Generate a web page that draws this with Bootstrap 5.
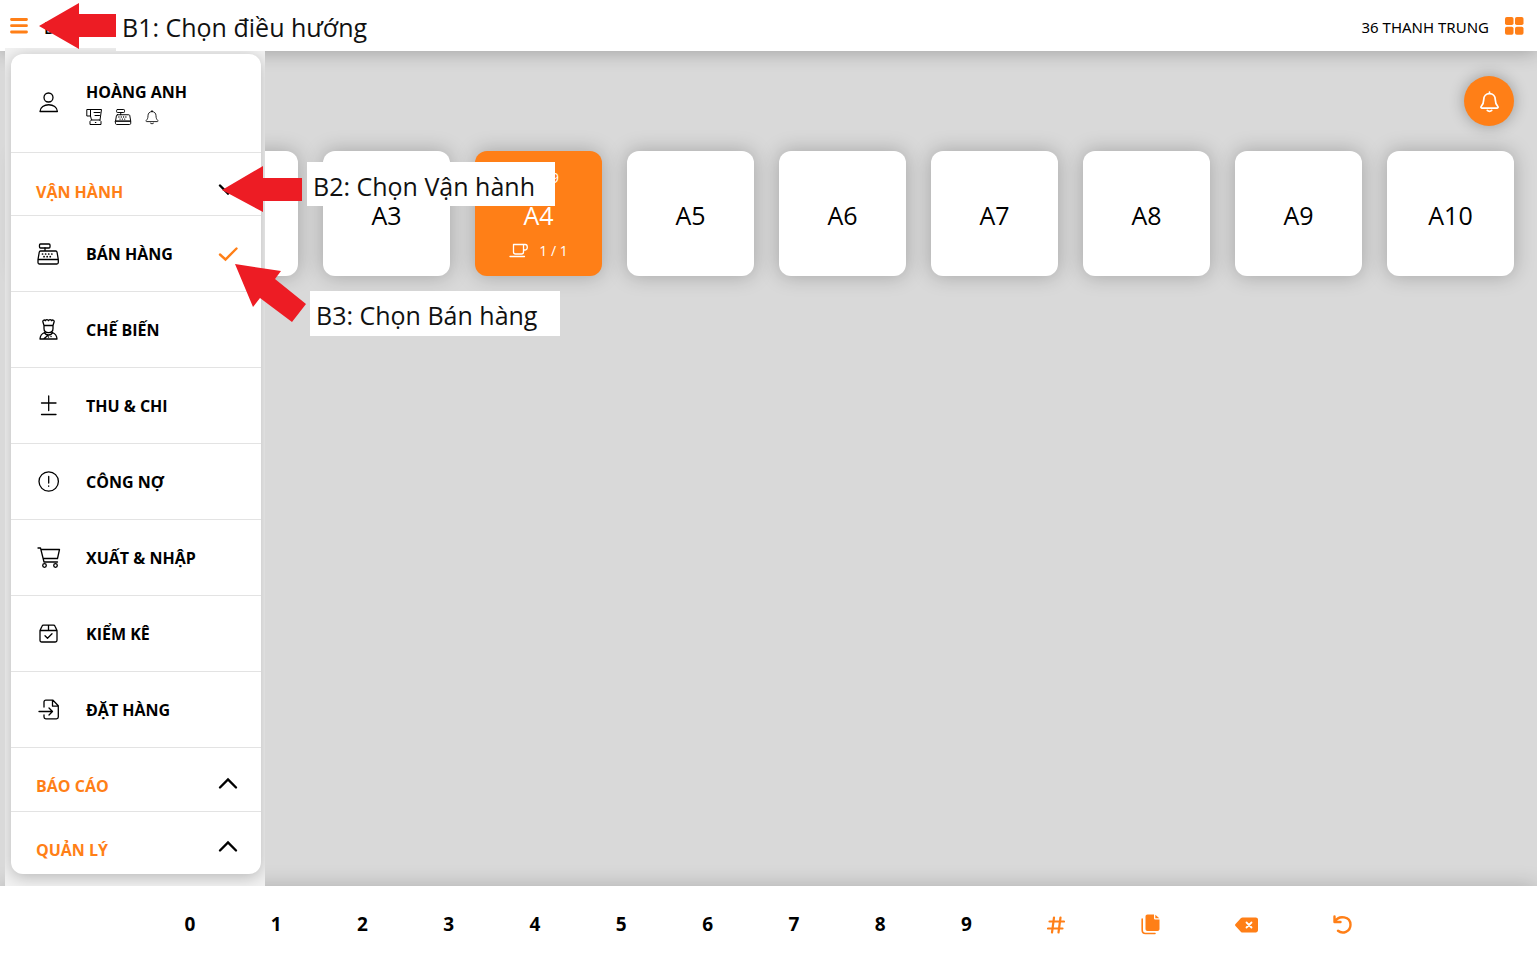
<!DOCTYPE html>
<html lang="vi">
<head>
<meta charset="utf-8">
<meta name="viewport" content="width=device-width, initial-scale=1">
<title>Bán hàng</title>
<link href="https://cdn.jsdelivr.net/npm/bootstrap@5.3.0/dist/css/bootstrap.min.css" rel="stylesheet">
<style>
  :root { --brand: #ff7f17; --line: #e3e3e3; }
  body { font-family: "Open Sans", "Noto Sans", sans-serif; color: #000; background: #fff; }
  svg { display: block; }
  .ico { fill: none; stroke: currentColor; stroke-width: 1.3; stroke-linecap: round; stroke-linejoin: round; }
  .thin { stroke-width: 1; }
  .plain { border: 0; background: none; padding: 0; color: inherit; font-weight: inherit; }
  .brand { color: var(--brand); }
  .topbar { height: 51px; padding: 0 13px 0 10px; box-shadow: 0 0 20px rgba(0,0,0,.3); z-index: 2; }
  .page-name { font-size: 16px; font-weight: 600; padding-left: 16px; }
  .shop { font-family: "Noto Sans", sans-serif; font-size: 15px; line-height: 24px; padding-top: 3px; }
  .floor { background: #d9d9d9; }
  .floor-in { padding: 25px 23px 25px 19px; }
  .bell { width: 50px; height: 50px; border-radius: 50%; background: var(--brand); color: #fff; box-shadow: 0 0 15px rgba(0,0,0,.3); }
  .tables { display: grid; grid-template-columns: repeat(10, 1fr); gap: 25px; margin-top: 25px; }
  .seat { height: 125px; border-radius: 12px; background: #fff; box-shadow: 0 0 20px rgba(0,0,0,.25); font-size: 25px; line-height: 24px; display: grid; grid-template-rows: 1fr 24px 1fr; padding: 2px 0 0; justify-items: center; align-items: center; }
  .seat.busy { background: var(--brand); color: #fff; font-weight: 500; }
  .seat small { font-size: 14px; line-height: 20px; }
  .seat .clock { justify-self: end; padding-right: 43px; }
  .side { left: 5px; top: -3px; bottom: 0; width: 260px; background: #f2f2f2; padding: 6px 4px 0 6px; z-index: 3; overflow: hidden; }
  .panel { background: #fff; border-radius: 12px; box-shadow: 0 3px 16px rgba(0,0,0,.25); font-size: 16px; font-weight: 700; }
  .panel > * { border-bottom: 1px solid var(--line); padding: 0 23px 0 25px; width: 100%; }
  .panel > :last-child { border-bottom: 0; }
  .user { height: 99px; }
  .group { height: 64px; }
  .group span { padding-top: 13px; }
  .group svg { margin-top: 8px; color: #000; }
  .group.first { height: 63px; }
  .group.first span { padding-top: 15px; }
  .group.final { height: 62px; }
  .entry { height: 76px; color: #000; text-decoration: none; }
  .slot { width: 50px; }
  .keys { height: 79px; padding: 0 188px 2px 182px; padding-inline: 12%; box-shadow: 0 0 20px rgba(0,0,0,.2); font-size: 19px; font-weight: 700; z-index: 2; }
  .note { position: absolute; z-index: 5; background: #fff; font-size: 25px; line-height: 40px; white-space: nowrap; padding: 4px 6px 0; color: #111; }
  .arrow { position: absolute; z-index: 6; fill: #ed1c24; }
  .n1 { left: 116px; top: 0; width: 260px; height: 51px; line-height: 46px; }
  .n2 { left: 307px; top: 162px; width: 248px; }
  .n3 { left: 310px; top: 291px; width: 250px; height: 45px; }
  .a1 { left: 39px; top: 3px; }
  .a2 { left: 222px; top: 166px; }
  .a3 { left: 235px; top: 264px; }
</style>
</head>
<body class="d-flex flex-column min-vh-100 position-relative">

<svg width="0" height="0" class="position-absolute" aria-hidden="true">
  <symbol id="bell" viewBox="0 0 24 24"><path d="M12 2.200v1.600M12 3.800c-3.600 0-6 2.700-6 6.200 0 4-1.200 5.600-2.700 7.200-.6.700-.2 1.700.7 1.700h16c.9 0 1.300-1 .7-1.700C19.200 15.600 18 14 18 10c0-3.500-2.400-6.200-6-6.200zM9.700 21.300c1.200 1.200 3.400 1.200 4.600 0"/></symbol>
  <symbol id="register" viewBox="0 0 24 24"><rect x="3.500" y="2" width="10.500" height="4" rx="1"/><path d="M9 6v3M4.500 9h15.200c.7 0 1.200.4 1.300 1l1.300 7.500H2l1.300-7.500c.1-.6.500-1 1.200-1zM2 17.500h20.300v3c0 .9-.6 1.500-1.500 1.500H3.500c-.9 0-1.500-.6-1.500-1.500z"/><path stroke-dasharray=".1 3" stroke-width="1.700" d="M6.500 12h12M8 14.700h9"/></symbol>
  <symbol id="up" viewBox="0 0 20 14"><path fill="none" stroke="currentColor" stroke-width="2.400" stroke-linecap="round" d="M2 10.500l8-8 8 8"/></symbol>
</svg>

<header class="topbar d-flex align-items-center justify-content-between bg-white position-relative">
  <div class="d-flex align-items-center">
    <button class="plain brand" aria-label="Menu"><svg width="18" height="18" viewBox="0 0 18 18" stroke="currentColor" stroke-width="2.800" stroke-linecap="round"><path d="M1.500 2.500h15M1.500 8.700h15M1.500 15h15"/></svg></button>
    <span class="page-name pt-1">B</span>
  </div>
  <div class="d-flex align-items-center gap-3">
    <span class="shop">36 THANH TRUNG</span>
    <button class="plain brand" aria-label="Apps"><svg width="19" height="18" viewBox="0 0 19 18" fill="currentColor"><rect width="8.500" height="8" rx="1.800"/><rect x="10" width="8.500" height="8" rx="1.800"/><rect y="9.800" width="8.500" height="8" rx="1.800"/><rect x="10" y="9.800" width="8.500" height="8" rx="1.800"/></svg></button>
  </div>
</header>

<main class="floor flex-grow-1 position-relative">
  <div class="floor-in">
    <div class="d-flex justify-content-end">
      <button class="plain bell d-flex align-items-center justify-content-center" aria-label="Bell"><svg class="ico" style="stroke-width:1.8" width="23" height="23"><use href="#bell"/></svg></button>
    </div>
    <div class="tables">
      <button class="plain seat"></button>
      <button class="plain seat"></button>
      <button class="plain seat"><span></span><span>A3</span></button>
      <button class="plain seat busy"><small class="clock">9</small><span>A4</span>
        <small class="d-flex align-items-center gap-2"><svg class="ico" width="22" height="16" viewBox="0 0 22 16"><path d="M4.500 1.500h10V9c0 1.200-.8 2-2 2h-6c-1.200 0-2-.8-2-2zM14.500 1.500h1.700c2.800 0 2.800 5.500 0 5.500h-1.700M1 13.500h14.500"/></svg><span>1 / 1</span></small></button>
      <button class="plain seat"><span></span><span>A5</span></button>
      <button class="plain seat"><span></span><span>A6</span></button>
      <button class="plain seat"><span></span><span>A7</span></button>
      <button class="plain seat"><span></span><span>A8</span></button>
      <button class="plain seat"><span></span><span>A9</span></button>
      <button class="plain seat"><span></span><span>A10</span></button>
    </div>
  </div>

  <aside class="side position-absolute">
    <nav class="panel">
      <div class="user d-flex align-items-center">
        <div class="slot"><svg class="ico" width="24" height="24" viewBox="0 0 24 24"><circle cx="12.500" cy="6.500" r="4.500"/><path d="M4 20.500c0-9 17.400-9 17.400 0z"/></svg></div>
        <div>
          <div>HOÀNG ANH</div>
          <div class="d-flex gap-2 pt-1">
            <svg class="ico thin me-1" width="16" height="18" viewBox="0 0 16 18"><path d="M3.500 1.500H15.500l-1.500 10.500H5.500L4.500 8M3.500 1.500H.8V8h3.700V1.500M8 4.500h6M9 7.500h4.500M5.500 12l-1.500 1.500v3h11v-3L13.500 12M9.300 14.500h.6"/></svg>
            <svg class="ico me-1" width="18" height="18"><use href="#register"/></svg>
            <svg class="ico" width="16" height="18"><use href="#bell"/></svg>
          </div>
        </div>
      </div>

      <button class="plain group first brand d-flex align-items-center justify-content-between"><span>VẬN HÀNH</span><svg width="20" height="14" viewBox="0 0 20 14"><path fill="none" stroke="currentColor" stroke-width="2.400" stroke-linecap="round" d="M2 4.500l8 8 8-8"/></svg></button>

      <a href="#" class="entry d-flex align-items-center"><span class="slot"><svg class="ico" width="24" height="24"><use href="#register"/></svg></span><span>BÁN HÀNG</span>
        <svg class="ms-auto brand" width="20" height="16" viewBox="0 0 20 16" fill="none" stroke="currentColor" stroke-width="2.400" stroke-linecap="round"><path d="M2 8.500L7.500 13.500 18.500 2.500"/></svg></a>

      <a href="#" class="entry d-flex align-items-center"><span class="slot"><svg class="ico" width="24" height="24" viewBox="0 0 24 24"><path d="M8 7.500L6.800 3.500c0-1.800 2-1.800 2.500-.8.8-1.500 2.700-1.500 3.200 0 .5-1.500 2.400-1.500 3.200 0 .5-1 2.500-1 2.500.8L17 7.500zM8 7.500v3c0 5.500 9 5.500 9 0v-3M8.500 14.500c-2.500 1-4.300 2.500-4.500 6.500h17c-.2-4-2-5.500-4.500-6.500M8.500 14.500c1 2.500 3.500 2.500 4 2.500s3 0 4-2.500M12.500 17L7.500 21M12.500 19h.1M15 18.500h.1"/></svg></span><span>CHẾ BIẾN</span></a>

      <a href="#" class="entry d-flex align-items-center"><span class="slot"><svg class="ico" width="24" height="24" viewBox="0 0 24 24"><path d="M5.500 9h14.500M12.700 2v14.500M5.500 20.500h14.500"/></svg></span><span>THU &amp; CHI</span></a>

      <a href="#" class="entry d-flex align-items-center"><span class="slot"><svg class="ico" width="24" height="24" viewBox="0 0 24 24"><circle cx="12.700" cy="11.500" r="9.700"/><path d="M12.700 6.500v6.500M12.700 16v.3"/></svg></span><span>CÔNG NỢ</span></a>

      <a href="#" class="entry d-flex align-items-center"><span class="slot"><svg class="ico" width="25" height="24" viewBox="0 0 25 24"><path d="M2 2h2.500l3.500 14h13.500M5 3.500h18.500L21.500 12.500H7.200"/><circle cx="8.500" cy="19.500" r="1.800"/><circle cx="19.500" cy="19.500" r="1.800"/></svg></span><span>XUẤT &amp; NHẬP</span></a>

      <a href="#" class="entry d-flex align-items-center"><span class="slot"><svg class="ico" width="24" height="24" viewBox="0 0 24 24"><path d="M4 8.500L6 4.200c.3-.7.800-1 1.500-1h10c.7 0 1.200.3 1.500 1l2 4.300v9.800c0 1-.7 1.700-1.700 1.700H5.700c-1 0-1.700-.7-1.700-1.700zM4 8.500h17M12.500 3.200v5.300M9 13.800l2.500 2.500 4.500-4.500"/></svg></span><span>KIỂM KÊ</span></a>

      <a href="#" class="entry d-flex align-items-center"><span class="slot"><svg class="ico" width="25" height="24" viewBox="0 0 25 24"><path d="M8 9V4c0-1 .8-1.800 1.800-1.800H17l5.300 5.500V19c0 1-.8 1.800-1.800 1.800H9.800C8.800 20.800 8 20 8 19v-2M16.500 2.500v5.700h5.500M3 13.500h13.500M13 10l3.500 3.500-3.500 3.500"/></svg></span><span>ĐẶT HÀNG</span></a>

      <button class="plain group brand d-flex align-items-center justify-content-between"><span>BÁO CÁO</span><svg width="20" height="14"><use href="#up"/></svg></button>
      <button class="plain group final brand d-flex align-items-center justify-content-between"><span>QUẢN LÝ</span><svg width="20" height="14"><use href="#up"/></svg></button>
    </nav>
  </aside>
</main>

<footer class="keys d-flex align-items-center justify-content-between bg-white position-relative">
  <button class="plain">0</button><button class="plain">1</button><button class="plain">2</button><button class="plain">3</button><button class="plain">4</button><button class="plain">5</button><button class="plain">6</button><button class="plain">7</button><button class="plain">8</button><button class="plain">9</button>
  <button class="plain brand" aria-label="Hash"><svg width="18" height="18" viewBox="0 0 18 18" fill="none" stroke="currentColor" stroke-width="2.200" stroke-linecap="round"><path d="M7 1.500l-2 15M13.500 1.500l-2 15M2.500 5.500H17M1 12.500h14.500"/></svg></button>
  <button class="plain brand" aria-label="Copy"><svg width="19" height="21" viewBox="0 0 19 21" fill="currentColor"><path d="M6.500.5H13V4c0 1 .6 1.500 1.500 1.500h4V15c0 1.200-.8 2-2 2h-10c-1.200 0-2-.8-2-2V2.500c0-1.200.8-2 2-2zM14.300.7l4 3.600h-4z"/><path d="M1.200 5v11c0 2 1.300 3.500 3.300 3.500H14" fill="none" stroke="currentColor" stroke-width="1.600" stroke-linecap="round"/></svg></button>
  <button class="plain brand" aria-label="Backspace"><svg width="23" height="16" viewBox="0 0 23 16"><path fill="currentColor" d="M7.500.5h13.300c1.200 0 2.200.9 2.200 2v10.800c0 1.200-1 2.200-2.200 2.200H7.500c-.6 0-1.100-.2-1.500-.6L.5 9c-.6-.6-.6-1.400 0-2L6 1.100c.4-.4.900-.6 1.500-.6z"/><path d="M11.500 5.500l5 5M16.500 5.500l-5 5" stroke="#fff" stroke-width="1.800" stroke-linecap="round"/></svg></button>
  <button class="plain brand" aria-label="Undo"><svg width="19" height="19" viewBox="0 0 19 19" fill="none" stroke="currentColor" stroke-width="2.400" stroke-linecap="round" stroke-linejoin="round"><path d="M1.500 1.500v5.500h6M2 6.500C6-.5 17.500 1.500 17.500 9.800c0 7-8 9.700-12.500 6"/></svg></button>
</footer>

<div class="note n1">B1: Chọn điều hướng</div>
<div class="note n2">B2: Chọn Vận hành</div>
<div class="note n3">B3: Chọn Bán hàng</div>
<svg class="arrow a1" width="77" height="46"><path d="M0 23L40 0v11h37v23H40v12z"/></svg>
<svg class="arrow a2" width="80" height="46"><path d="M0 24L41 0v12h39v23H41v11z"/></svg>
<svg class="arrow a3" width="71" height="58"><path d="M0 0l46 7-6 8 31 25-14 18-32-24-7 9z"/></svg>

<script src="https://cdn.jsdelivr.net/npm/bootstrap@5.3.0/dist/js/bootstrap.bundle.min.js"></script>
</body>
</html>
